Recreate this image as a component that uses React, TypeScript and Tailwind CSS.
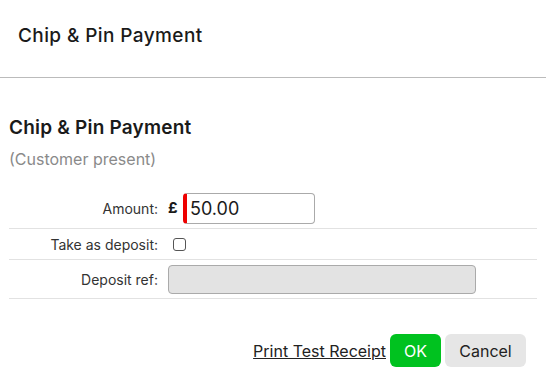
export default function App() {
  const font = { fontFamily: "Inter, 'Liberation Sans', sans-serif" };
  return (
    <div className="w-[546px] h-[391px] bg-white text-[#1a1a1a]" style={font}>
      {/* header */}
      <div className="h-[78px] border-b border-[#bbbbbb] flex items-center px-[18px] pb-[5px]">
        <div className="text-[19px] font-medium tracking-[0.4px]">Chip &amp; Pin Payment</div>
      </div>

      <div className="px-[9px] pt-[38px]">
        <div className="text-[19px] font-semibold leading-[24px] tracking-[0.2px]">Chip &amp; Pin Payment</div>
        <div className="text-[16px] leading-[24px] text-[#8a8a8a] mt-[7px]">(Customer present)</div>

        {/* form rows */}
        <div className="mt-[18px] w-[528px] text-[14px]">
          <div className="grid grid-cols-[151px_1fr] items-center border-b border-[#e2e2e2] py-[4px]">
            <div className="text-right pr-[2px] text-[#333]">Amount:</div>
            <div className="flex items-center pl-[8px]">
              <span className="font-bold text-[15px] w-[15px]">£</span>
              <input
                readOnly
                value="50.00"
                className="w-[132px] h-[31px] border border-[#aaaaaa] border-l-[4px] border-l-[#ee0000] rounded-[4px] pl-[3px] text-[18px] outline-none"
              />
            </div>
          </div>
          <div className="grid grid-cols-[151px_1fr] items-center border-b border-[#e2e2e2] h-[31px]">
            <div className="text-right pr-[2px] text-[#333]">Take as deposit:</div>
            <div className="pl-[8px] flex items-center">
              <span className="ml-[5px] w-[13px] h-[13px] border border-[#555] rounded-[3px]" />
            </div>
          </div>
          <div className="grid grid-cols-[151px_1fr] items-center border-b border-[#e2e2e2] pt-[5px] pb-[4px]">
            <div className="text-right pr-[2px] text-[#333]">Deposit ref:</div>
            <div className="pl-[8px]">
              <div className="w-[308px] h-[29px] bg-[#e3e3e3] border border-[#aaaaaa] rounded-[4px]" />
            </div>
          </div>
        </div>
      </div>

      {/* footer */}
      <div className="flex justify-end items-center gap-[4px] pr-[20px] mt-[35px] text-[16px]">
        <a className="underline text-[#222] cursor-pointer">Print Test Receipt</a>
        <button className="w-[51px] h-[33px] rounded-[6px] bg-[#00c21f] text-white">OK</button>
        <button className="w-[81px] h-[33px] rounded-[6px] bg-[#e6e6e6] text-[#222]">Cancel</button>
      </div>
    </div>
  );
}
